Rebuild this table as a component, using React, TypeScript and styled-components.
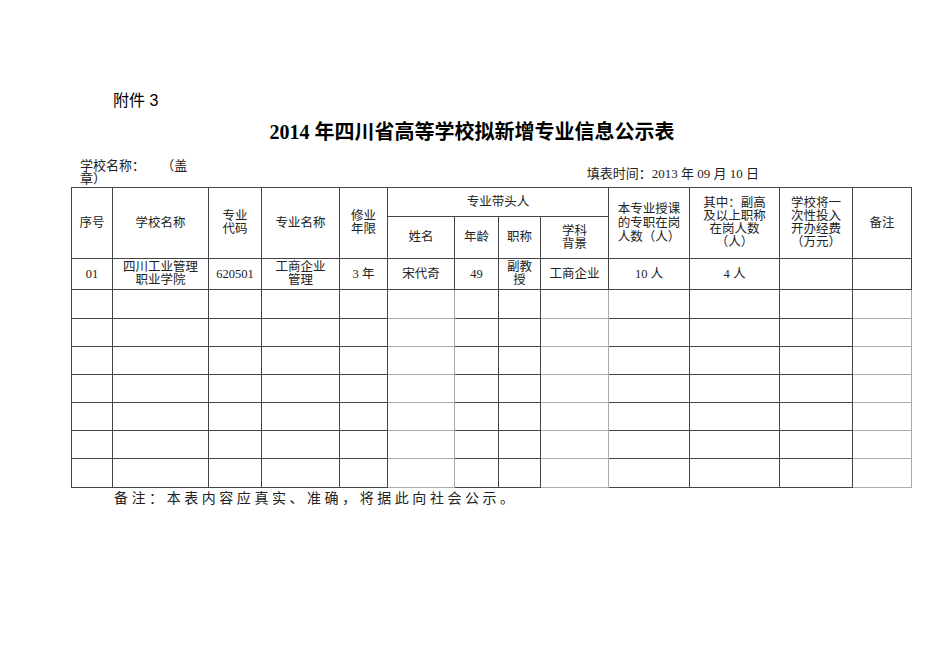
import styled, { createGlobalStyle } from "styled-components"

const GlobalStyle = createGlobalStyle`
    html, body {
        margin: 0;
        padding: 0;
        background: #ffffff;
    }
`

const SERIF = `"Liberation Serif", "Noto Sans CJK SC", serif`

const Page = styled.div`
    width: 950px;
    height: 672px;
    box-sizing: border-box;
    padding-top: 91px;
    color: #000;
    font-family: ${SERIF};
`

const Attachment = styled.div`
    margin-left: 113px;
    font-family: "Liberation Sans", "Noto Sans CJK SC", sans-serif;
    font-size: 16px;
    line-height: 20px;
`

const Title = styled.h1`
    margin: 8px 0 0;
    padding-right: 6px;
    text-align: center;
    font-family: ${SERIF};
    font-size: 20px;
    line-height: 26px;
    font-weight: bold;
`

const MetaRow = styled.div`
    display: flex;
    justify-content: space-between;
    align-items: flex-end;
    margin: 14px 0 0 80px;
    width: 679px;
    font-size: 13px;
    line-height: 13px;
    color: #222;
`

const SchoolName = styled.div`
    white-space: pre;
`

const FillDate = styled.div`
    padding-bottom: 5px;
`

const Sheet = styled.table`
    margin: 2px 0 0 71px;
    width: 841px;
    border-collapse: collapse;
    table-layout: fixed;
    font-size: 12.5px;
    color: #222;
`

const Cell = styled.td<{ $lh?: number; $h?: number; $gray?: boolean }>`
    border: 1px solid ${p => (p.$gray ? "#aaa" : "#444")};
    padding: 0 1px;
    text-align: center;
    vertical-align: middle;
    line-height: ${p => p.$lh ?? 13}px;
    height: ${p => (p.$h ? `${p.$h}px` : "auto")};
    box-sizing: border-box;
`

const Note = styled.div`
    margin: 1px 0 0 114px;
    font-size: 14px;
    line-height: 20px;
    letter-spacing: 3.55px;
    color: #222;
`

const widths = [41, 96, 53, 78, 48, 67, 44, 42, 68, 81, 90, 73, 59]
const blankRows = [29, 28, 28, 28, 28, 28, 29]

const firstRow = [
    "01",
    "四川工业管理\n职业学院",
    "620501",
    "工商企业\n管理",
    "3 年",
    "宋代奇",
    "49",
    "副教\n授",
    "工商企业",
    "10 人",
    "4 人",
    "",
    "",
]

const lines = (text: string) =>
    text.split("\n").map((t, i) => (
        <span key={i}>
            {i > 0 && <br />}
            {t}
        </span>
    ))

export default function App() {
    return (
        <Page>
            <GlobalStyle />
            <Attachment>附件 3</Attachment>
            <Title>2014 年四川省高等学校拟新增专业信息公示表</Title>
            <MetaRow>
                <SchoolName>{"学校名称：　   （盖\n章）"}</SchoolName>
                <FillDate>填表时间：2013 年 09 月 10 日</FillDate>
            </MetaRow>
            <Sheet>
                <colgroup>
                    {widths.map((w, i) => (
                        <col key={i} style={{ width: w }} />
                    ))}
                </colgroup>
                <tbody>
                    <tr>
                        <Cell rowSpan={2}>序号</Cell>
                        <Cell rowSpan={2}>学校名称</Cell>
                        <Cell rowSpan={2} $lh={13}>{lines("专业\n代码")}</Cell>
                        <Cell rowSpan={2}>专业名称</Cell>
                        <Cell rowSpan={2} $lh={13}>{lines("修业\n年限")}</Cell>
                        <Cell colSpan={4} $h={29}>专业带头人</Cell>
                        <Cell rowSpan={2} $lh={14}>{lines("本专业授课\n的专职在岗\n人数（人）")}</Cell>
                        <Cell rowSpan={2} $lh={13}>{lines("其中：副高\n及以上职称\n在岗人数\n（人）")}</Cell>
                        <Cell rowSpan={2} $lh={13}>{lines("学校将一\n次性投入\n开办经费\n（万元）")}</Cell>
                        <Cell rowSpan={2}>备注</Cell>
                    </tr>
                    <tr>
                        <Cell $h={42}>姓名</Cell>
                        <Cell>年龄</Cell>
                        <Cell>职称</Cell>
                        <Cell $lh={13}>{lines("学科\n背景")}</Cell>
                    </tr>
                    <tr>
                        {firstRow.map((t, i) => (
                            <Cell key={i} $h={31} $lh={13}>{lines(t)}</Cell>
                        ))}
                    </tr>
                    {blankRows.map((h, r) => (
                        <tr key={r}>
                            {widths.map((_, c) => (
                                <Cell key={c} $h={h} $gray={c === 5 || c === 8 || c === 12} />
                            ))}
                        </tr>
                    ))}
                </tbody>
            </Sheet>
            <Note>备注：本表内容应真实、准确，将据此向社会公示。</Note>
        </Page>
    )
}
